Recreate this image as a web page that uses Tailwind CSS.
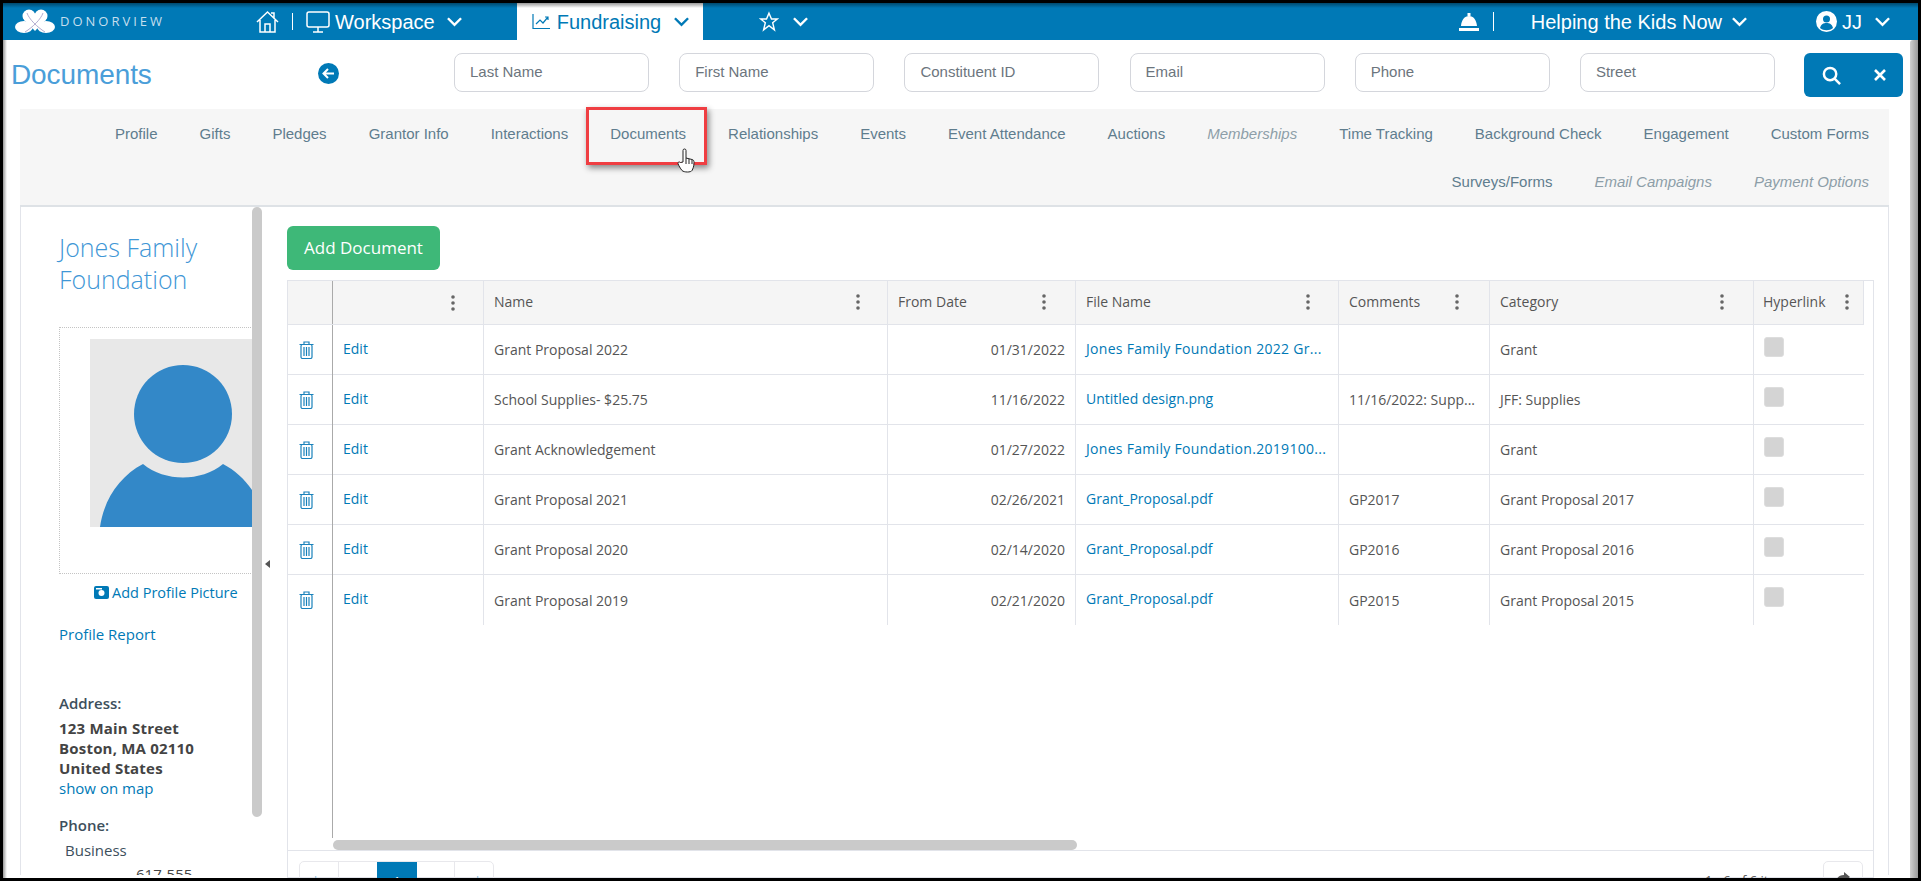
<!DOCTYPE html>
<html lang="en">
<head>
  <meta charset="UTF-8">
  <title>Documents</title>
  <script src="https://cdn.jsdelivr.net/npm/@tailwindcss/browser@4"></script>
</head>
<body class="bg-black font-['Open_Sans',sans-serif] overflow-hidden">
  <div class="relative w-[1921px] h-[881px] overflow-hidden">
    <div class="absolute left-[3px] top-[3px] w-[1915px] h-[875px] bg-white overflow-hidden">

      <!-- top bar -->
      <header class="h-[37px] bg-[#0079b6] flex items-center text-white font-['Liberation_Sans',sans-serif] text-[20px] relative">
        <div class="flex items-center w-[253px] pl-[12px]">
          <svg class="w-[40px] h-[25px] shrink-0" viewBox="0 0 40 25">
            <g fill="#fff"><ellipse cx="9" cy="18" rx="9" ry="6"/><ellipse cx="31" cy="18" rx="9" ry="6"/><circle cx="14" cy="7" r="6.500"/><circle cx="26" cy="7" r="6.500"/><path d="M8 9h24L20 22Z"/></g>
            <path d="M12 4c2 6 10 14 18 19M28 4c-2 6-10 14-18 19" fill="none" stroke="#a9a3c9" stroke-width="0.900"/>
          </svg>
          <span class="ml-[5px] text-[13px] tracking-[3px] text-[#c6dfee] font-['Open_Sans',sans-serif]">DONORVIEW</span>
        </div>
        <div class="flex items-center gap-[13px]">
          <svg class="w-[23px] h-[24px]" viewBox="0 0 23 24" fill="none" stroke="#fff" stroke-width="1.500"><path d="M1 12 11.500 2 22 12M4 10v12h15V10M9 22v-8h5v8M18 8V3h-3"/></svg>
          <span class="w-px h-[17px] bg-white"></span>
          <svg class="w-[24px] h-[24px]" viewBox="0 0 24 24" fill="none" stroke="#fff" stroke-width="1.500"><rect x="1" y="2" width="22" height="15" rx="2"/><path d="M7 22h10M12 17v5"/></svg>
        </div>
        <span class="ml-[5px]">Workspace</span>
        <svg class="w-[15px] h-[10px] ml-[12px]" viewBox="0 0 16 10" fill="none" stroke="#fff" stroke-width="2.600"><path d="m1 1 7 7 7-7"/></svg>
        <div class="ml-[55px] w-[186px] h-full bg-white text-[#0079b6] flex items-center pl-[15px]">
          <svg class="w-[19px] h-[17px]" viewBox="0 0 19 17" fill="none" stroke="#0079b6" stroke-width="1.200"><path d="M1 1v14.500h17M4 11l4-4 3 3 5-6M13 4h3v3"/></svg>
          <span class="ml-[6px]">Fundraising</span>
          <svg class="w-[15px] h-[10px] ml-[13px]" viewBox="0 0 16 10" fill="none" stroke="#0079b6" stroke-width="2.600"><path d="m1 1 7 7 7-7"/></svg>
        </div>
        <svg class="w-[20px] h-[21px] ml-[56px]" viewBox="0 0 24 24" fill="none" stroke="#fff" stroke-width="1.700"><path d="m12 2 3 7h7l-5.600 4.500L18.500 22 12 17l-6.500 5 2.100-8.500L2 9h7z"/></svg>
        <svg class="w-[15px] h-[10px] ml-[14px]" viewBox="0 0 16 10" fill="none" stroke="#fff" stroke-width="2.600"><path d="m1 1 7 7 7-7"/></svg>
        <div class="ml-auto flex items-center">
          <svg class="w-[20px] h-[18px]" viewBox="0 0 20 18" fill="#fff"><path d="M8.500 0h3v3h-3zM10 3c4.500 0 7.500 4 8 10H2c.5-6 3.500-10 8-10ZM0 15h20v3H0z"/></svg>
          <span class="ml-[14px] w-px h-[19px] bg-white"></span>
          <span class="ml-[37px]">Helping the Kids Now</span>
          <svg class="w-[15px] h-[10px] ml-[10px]" viewBox="0 0 16 10" fill="none" stroke="#fff" stroke-width="2.600"><path d="m1 1 7 7 7-7"/></svg>
          <svg class="w-[21px] h-[21px] ml-[69px]" viewBox="0 0 21 21"><circle cx="10.500" cy="10.500" r="10.500" fill="#fff"/><circle cx="10.500" cy="8" r="3.500" fill="#0079b6"/><path d="M4 17c1-4 3.500-5 6.500-5s5.500 1 6.500 5c-3.500 3-9.500 3-13 0Z" fill="#0079b6"/></svg>
          <span class="ml-[5px]">JJ</span>
          <svg class="w-[15px] h-[10px] ml-[13px] mr-[28px]" viewBox="0 0 16 10" fill="none" stroke="#fff" stroke-width="2.600"><path d="m1 1 7 7 7-7"/></svg>
        </div>
        <div class="absolute left-0 right-0 top-0 h-[5px] bg-gradient-to-b from-black/40 to-transparent"></div>
      </header>

      <!-- search row -->
      <div class="h-[69px] flex items-start pt-[13px] pl-[8px] font-['Liberation_Sans',sans-serif]">
        <h1 class="w-[307px] mt-[2px] text-[28px] leading-[39px] tracking-[-0.1px] text-[#4a9ed9]">Documents</h1>
        <svg class="w-[21px] h-[21px] mt-[10px]" viewBox="0 0 21 21"><circle cx="10.500" cy="10.500" r="10.500" fill="#0079b6"/><path d="M16 10.500H6M10 6l-4.500 4.500L10 15" fill="none" stroke="#fff" stroke-width="2"/></svg>
        <div class="ml-[115px] flex gap-[30.200px]">
          <div class="w-[195px] h-[39px] rounded-[8px] border border-[#d4d6dc] flex items-center px-[15px] text-[15px] text-[#6c757d]">Last Name</div>
          <div class="w-[195px] h-[39px] rounded-[8px] border border-[#d4d6dc] flex items-center px-[15px] text-[15px] text-[#6c757d]">First Name</div>
          <div class="w-[195px] h-[39px] rounded-[8px] border border-[#d4d6dc] flex items-center px-[15px] text-[15px] text-[#6c757d]">Constituent ID</div>
          <div class="w-[195px] h-[39px] rounded-[8px] border border-[#d4d6dc] flex items-center px-[15px] text-[15px] text-[#6c757d]">Email</div>
          <div class="w-[195px] h-[39px] rounded-[8px] border border-[#d4d6dc] flex items-center px-[15px] text-[15px] text-[#6c757d]">Phone</div>
          <div class="w-[195px] h-[39px] rounded-[8px] border border-[#d4d6dc] flex items-center px-[15px] text-[15px] text-[#6c757d]">Street</div>
        </div>
        <div class="ml-[29px] w-[99px] h-[44px] rounded-[6px] bg-[#0079b6] flex items-center text-white">
          <svg class="w-[19px] h-[19px] ml-[18px]" viewBox="0 0 20 20" fill="none" stroke="#fff" stroke-width="2.600"><circle cx="8.500" cy="8.500" r="6.500"/><path d="m13 13 6 6"/></svg>
          <svg class="w-[12px] h-[12px] ml-[33px]" viewBox="0 0 12 12" fill="none" stroke="#fff" stroke-width="2.600"><path d="m1 1 10 10M11 1 1 11"/></svg>
        </div>
      </div>

      <!-- tabs -->
      <nav class="ml-[17px] w-[1869px] h-[98px] bg-[#f6f6f6] border-b-2 border-[#dee2e6] pt-[1px] pr-[20px] text-[15px] text-[#5f7d8e] font-['Liberation_Sans',sans-serif]">
        <div class="h-[49px] flex items-center justify-end gap-[42px]">
          <span>Profile</span><span>Gifts</span><span>Pledges</span><span>Grantor Info</span><span>Interactions</span><span>Documents</span><span>Relationships</span><span>Events</span><span>Event Attendance</span><span>Auctions</span><span class="italic text-[#8d9ea8]">Memberships</span><span>Time Tracking</span><span>Background Check</span><span>Engagement</span><span>Custom Forms</span>
        </div>
        <div class="h-[47px] flex items-center justify-end gap-[42px]">
          <span>Surveys/Forms</span><span class="italic text-[#8d9ea8]">Email Campaigns</span><span class="italic text-[#8d9ea8]">Payment Options</span>
        </div>
      </nav>

      <!-- tab highlight from the screenshot -->
      <div class="absolute left-[583px] top-[104px] w-[121px] h-[58px] border-[3px] border-[#ef3e42] shadow-[2px_3px_6px_rgba(0,0,0,0.45)]"></div>
      <svg class="absolute left-[674px] top-[145px] w-[18px] h-[26px]" viewBox="0 0 18 26" fill="#fff" stroke="#222" stroke-width="1"><path d="M6 14V2.500a1.500 1.500 0 0 1 3 0V10l6 1.500c1.500.5 2 1 2 3 0 4-1 6-2 8-1 2-8 2-10 0-1.500-2-3.500-5-4-7-.3-1.500 1.500-2 2.500-1z"/><path d="M9 10v6M12 11v5M15 12v4" fill="none"/></svg>

      <!-- body -->
      <div class="ml-[17px] w-[1869px] h-[668px] flex border-r border-l border-[#e2e4ea]">
        <aside class="w-[231px] h-full shrink-0 overflow-hidden pl-[38px] text-[15px] text-[#444]">
          <h2 class="pt-[24px] text-[25px] leading-[32px] font-light text-[#3f97d6]">Jones Family Foundation</h2>
          <div class="mt-[32px] w-[260px] h-[247px] border border-dotted border-[#c4c4c4] pt-[11px] pl-[30px]">
            <svg class="w-[190px] h-[188px]" viewBox="0 0 190 188">
              <rect width="190" height="188" fill="#e8e8e8"/>
              <circle cx="93" cy="75" r="49" fill="#3388c8"/>
              <path d="M10 188C14 160 30 137 53 125 75 143 111 143 133 125 156 137 172 160 176 188Z" fill="#3388c8"/>
            </svg>
          </div>
          <div class="mt-[8px] flex items-center pl-[35px] text-[14.500px] text-[#0079b6]">
            <svg class="w-[15px] h-[13px] mr-[3px]" viewBox="0 0 15 13"><path d="M2 0h11a2 2 0 0 1 2 2v9a2 2 0 0 1-2 2H2a2 2 0 0 1-2-2V2a2 2 0 0 1 2-2Z" fill="#0079b6"/><circle cx="7.500" cy="7" r="3" fill="#fff"/><path d="M2 2h6v1.500H2z" fill="#fff"/></svg>
            <span>Add Profile Picture</span>
          </div>
          <p class="mt-[19px] text-[#0079b6]">Profile Report</p>
          <p class="mt-[47px] font-semibold text-[#3d4f5c]">Address:</p>
          <div class="mt-[3px] leading-[20px]">
            <p class="font-bold tracking-[0.2px]">123 Main Street</p>
            <p class="font-bold tracking-[0.2px]">Boston, MA 02110</p>
            <p class="font-bold tracking-[0.2px]">United States</p>
            <p class="text-[#0079b6]">show on map</p>
          </div>
          <p class="mt-[16px] font-semibold text-[#3d4f5c]">Phone:</p>
          <p class="mt-[3px] ml-[6px] text-[#3d4f5c]">Business</p>
          <div class="mt-[1px] ml-[6px] flex">
            <span class="w-[71px]">-</span><span>617-555-</span>
          </div>
        </aside>

        <!-- splitter -->
        <div class="w-[10px] h-[610px] shrink-0 rounded-[5px] bg-[#cacaca]"></div>
        <div class="w-[25px] shrink-0 relative">
          <span class="absolute left-[3px] top-[353px] w-0 h-0 border-y-[4px] border-y-transparent border-r-[5px] border-r-[#555]"></span>
        </div>

        <main class="flex-1 min-w-0 pt-[19px]">
          <button class="w-[153px] h-[44px] rounded-[6px] bg-[#3eb878] text-white text-[17px]">Add Document</button>
          <div class="relative mt-[10px] w-[1587px] h-[598px] border border-[#e2e4ea] text-[14px] text-[#555]">
            <div class="flex h-[44px] bg-[#f5f5f5] border-b border-[#e2e4ea] w-[1576px]">
              <div class="w-[45px] border-r border-[#aaa]"></div>
              <div class="w-[151px] border-r border-[#e2e4ea] flex items-center justify-end pr-[28px]"><svg class="w-[4px] h-[16px]" viewBox="0 0 4 16" fill="#666"><circle cx="2" cy="2" r="1.800"/><circle cx="2" cy="8" r="1.800"/><circle cx="2" cy="14" r="1.800"/></svg></div>
              <div class="w-[404px] border-r border-[#e2e4ea] flex items-center justify-between pl-[10px] pr-[27px] pb-[2px]"><span>Name</span><svg class="w-[4px] h-[16px]" viewBox="0 0 4 16" fill="#666"><circle cx="2" cy="2" r="1.800"/><circle cx="2" cy="8" r="1.800"/><circle cx="2" cy="14" r="1.800"/></svg></div>
              <div class="w-[188px] border-r border-[#e2e4ea] flex items-center justify-between pl-[10px] pr-[29px] pb-[2px]"><span>From Date</span><svg class="w-[4px] h-[16px]" viewBox="0 0 4 16" fill="#666"><circle cx="2" cy="2" r="1.800"/><circle cx="2" cy="8" r="1.800"/><circle cx="2" cy="14" r="1.800"/></svg></div>
              <div class="w-[263px] border-r border-[#e2e4ea] flex items-center justify-between pl-[10px] pr-[28px] pb-[2px]"><span>File Name</span><svg class="w-[4px] h-[16px]" viewBox="0 0 4 16" fill="#666"><circle cx="2" cy="2" r="1.800"/><circle cx="2" cy="8" r="1.800"/><circle cx="2" cy="14" r="1.800"/></svg></div>
              <div class="w-[151px] border-r border-[#e2e4ea] flex items-center justify-between pl-[10px] pr-[30px] pb-[2px]"><span>Comments</span><svg class="w-[4px] h-[16px]" viewBox="0 0 4 16" fill="#666"><circle cx="2" cy="2" r="1.800"/><circle cx="2" cy="8" r="1.800"/><circle cx="2" cy="14" r="1.800"/></svg></div>
              <div class="w-[264px] border-r border-[#e2e4ea] flex items-center justify-between pl-[10px] pr-[29px] pb-[2px]"><span>Category</span><svg class="w-[4px] h-[16px]" viewBox="0 0 4 16" fill="#666"><circle cx="2" cy="2" r="1.800"/><circle cx="2" cy="8" r="1.800"/><circle cx="2" cy="14" r="1.800"/></svg></div>
              <div class="w-[110px] border-r border-[#e2e4ea] flex items-center justify-between pl-[9px] pr-[14px] pb-[2px]"><span>Hyperlink</span><svg class="w-[4px] h-[16px]" viewBox="0 0 4 16" fill="#666"><circle cx="2" cy="2" r="1.800"/><circle cx="2" cy="8" r="1.800"/><circle cx="2" cy="14" r="1.800"/></svg></div>
            </div>
            <div id="rows" class="w-[1576px]"></div>
            <!-- frozen column line and scroll bar -->
            <div class="absolute left-[44px] top-[44px] bottom-[39px] w-px bg-[#aaa]"></div>
            <div class="absolute left-[45px] top-[559px] w-[744px] h-[10px] rounded-[5px] bg-[#cacaca]"></div>
            <div class="absolute left-0 right-0 top-[569px] h-px bg-[#e2e4ea]"></div>
            <div class="absolute left-[11px] top-[580px] h-[40px] flex rounded-[5px] border border-[#e8e8ec] text-[13px] text-[#7fb6d8]">
              <span class="w-[39px] pt-[10px] text-center border-r border-[#e8e8ec]">|◂</span>
              <span class="w-[38px] pt-[10px] text-center">◂</span>
              <span class="w-[40px] pt-[10px] text-center bg-[#0079b6] text-white">1</span>
              <span class="w-[38px] pt-[10px] text-center border-r border-[#e8e8ec]">▸</span>
              <span class="w-[38px] pt-[10px] text-center">▸|</span>
            </div>
            <span class="absolute left-[1417px] top-[590px] text-[13px]">1 - 6 of 6 items</span>
            <div class="absolute left-[1535px] top-[580px] w-[40px] h-[40px] rounded-[5px] border border-[#e8e8ec] flex justify-center pt-[10px]">
              <svg class="w-[14px] h-[12px]" viewBox="0 0 14 12" fill="#555"><path d="M8 0l6 5-6 5V7C4 7 2 8 0 11c0-5 3-8 8-8Z"/></svg>
            </div>
          </div>
        </main>
      </div>
      <div class="absolute left-0 top-[37px] bottom-0 w-[4px] bg-gradient-to-r from-black/40 to-transparent"></div>
    </div>
    <!-- shadow strip of the captured window -->
    <div class="absolute left-[1910px] top-[40px] w-[8px] h-[838px] rounded-tl-[3px] bg-[linear-gradient(90deg,#d0d0d0,#9a9a9a)]"></div>
  </div>

  <script>
    const docs = [
      ["Grant Proposal 2022", "01/31/2022", "Jones Family Foundation 2022 Gr...", "", "Grant"],
      ["School Supplies- $25.75", "11/16/2022", "Untitled design.png", "11/16/2022: Supp...", "JFF: Supplies"],
      ["Grant Acknowledgement", "01/27/2022", "Jones Family Foundation.2019100...", "", "Grant"],
      ["Grant Proposal 2021", "02/26/2021", "Grant_Proposal.pdf", "GP2017", "Grant Proposal 2017"],
      ["Grant Proposal 2020", "02/14/2020", "Grant_Proposal.pdf", "GP2016", "Grant Proposal 2016"],
      ["Grant Proposal 2019", "02/21/2020", "Grant_Proposal.pdf", "GP2015", "Grant Proposal 2015"]
    ];
    const trash = `<svg class="w-[15px] h-[18px]" viewBox="0 0 15 18" fill="none" stroke="#1a82bb" stroke-width="1.200"><path d="M.5 3.500h14M5 3.500V1h5v2.500"/><rect x="2" y="3.500" width="11" height="14" rx="1.500"/><path d="M5 6v9M7.500 6v9M10 6v9"/></svg>`;
    document.getElementById("rows").innerHTML = docs.map((d, i) => `
      <div class="flex h-[50px] ${i < 5 ? "border-b" : ""} border-[#e2e4ea]">
        <div class="w-[45px] flex items-center pl-[11px]">${trash}</div>
        <div class="w-[151px] border-r border-[#e2e4ea] flex items-center pl-[10px] pb-[3px] text-[#0079b6]">Edit</div>
        <div class="w-[404px] border-r border-[#e2e4ea] flex items-center pl-[10px]">${d[0]}</div>
        <div class="w-[188px] border-r border-[#e2e4ea] flex items-center justify-end pr-[10px]">${d[1]}</div>
        <div class="w-[263px] border-r border-[#e2e4ea] flex items-center pl-[10px] pb-[3px] text-[#0079b6] ${d[2].startsWith("Jones") ? "tracking-[0.3px]" : ""}">${d[2]}</div>
        <div class="w-[151px] border-r border-[#e2e4ea] flex items-center pl-[10px]">${d[3]}</div>
        <div class="w-[264px] border-r border-[#e2e4ea] flex items-center pl-[10px]">${d[4]}</div>
        <div class="w-[110px] pl-[10px] pt-[12px]"><div class="w-[20px] h-[20px] rounded-[3px] bg-[#d4d4d4] border border-[#ddd]"></div></div>
      </div>`).join("");
  </script>
</body>
</html>
